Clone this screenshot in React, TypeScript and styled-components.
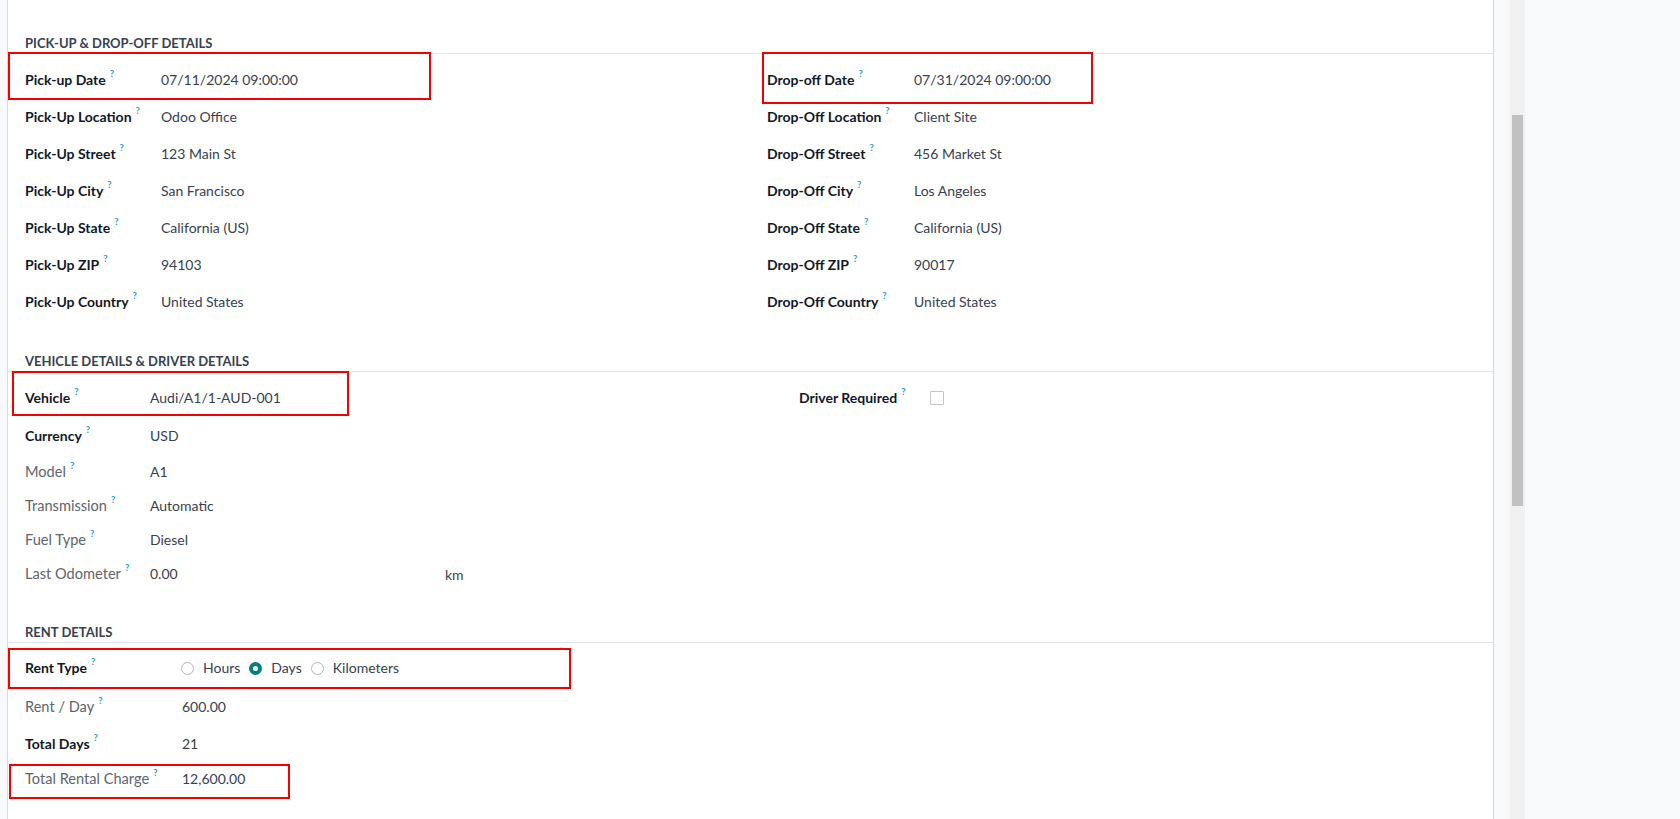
import React from 'react';
import styled, { createGlobalStyle } from 'styled-components';

const GlobalStyle = createGlobalStyle`
  html, body { margin: 0; padding: 0; }
  body {
    background: #f8f9fa;
    font-family: Lato, "Noto Sans", "Liberation Sans", sans-serif;
    -webkit-font-smoothing: antialiased;
  }
  * { box-sizing: border-box; }
`;

const Page = styled.div`
  display: flex;
  height: 819px;
  overflow: hidden;
  background: #f8f9fa;
  padding-left: 7px;
`;

const Sheet = styled.div`
  position: relative;
  flex: none;
  width: 1487px;
  background: #fff;
  border-left: 1px solid #d8dadd;
  border-right: 1px solid #d8dadd;
  padding-top: 33px;
`;

const ScrollTrack = styled.div`
  flex: none;
  width: 15px;
  margin-left: 16px;
  background: #f0f0f0;
  padding: 115px 2px 0;
`;

const ScrollThumb = styled.div`
  height: 391px;
  background: #c1c1c1;
`;

const Section = styled.section<{ $gap: number }>`
  margin-top: ${(p) => p.$gap}px;
`;

const SectionTitle = styled.h3`
  margin: 0;
  padding: 0 17px;
  height: 21px;
  line-height: 20px;
  font-size: 13px;
  font-weight: 700;
  color: #374151;
  text-transform: uppercase;
  border-bottom: 1px solid #e3e4e6;
`;

const Columns = styled.div`
  display: grid;
  grid-template-columns: 742px 1fr;
  padding: 7px 17px 0;
`;

const Group = styled.div<{ $indent?: number }>`
  display: flex;
  flex-direction: column;
  padding-left: ${(p) => p.$indent ?? 0}px;
`;

const Row = styled.div<{ $h: number; $label: number }>`
  display: grid;
  grid-template-columns: ${(p) => p.$label}px 1fr;
  align-items: center;
  height: ${(p) => p.$h}px;
`;

const Label = styled.span<{ $muted?: boolean }>`
  font-size: ${(p) => (p.$muted ? 14.6 : 14)}px;
  line-height: 20px;
  font-weight: ${(p) => (p.$muted ? 400 : 700)};
  color: ${(p) => (p.$muted ? '#60656d' : '#111827')};
  white-space: nowrap;
`;

const Help = styled.sup`
  font-size: 9.5px;
  font-weight: 700;
  color: #2a9bcc;
  margin-left: 4px;
  line-height: 0;
  position: relative;
  top: -2px;
`;

const Value = styled.span`
  font-size: 14px;
  line-height: 20px;
  color: #374151;
  white-space: nowrap;
`;

const UnitValue = styled.div`
  display: flex;
  align-items: center;
`;

const UnitField = styled.span`
  width: 295px;
  font-size: 14px;
  line-height: 20px;
  color: #374151;
`;

const Unit = styled.span`
  font-size: 14px;
  color: #374151;
`;

const RadioGroup = styled.div`
  display: flex;
  align-items: center;
  margin-left: -1px;
`;

const RadioOption = styled.label`
  display: flex;
  align-items: center;
  gap: 9px;
  margin-right: 9px;
  font-size: 14px;
  line-height: 20px;
  color: #374151;
`;

const RadioDot = styled.span<{ $on?: boolean }>`
  width: 13px;
  height: 13px;
  border-radius: 50%;
  background: #fff;
  border: ${(p) => (p.$on ? '4px solid #017e84' : '1px solid #b3b8be')};
`;

const Checkbox = styled.span`
  display: block;
  width: 14px;
  height: 14px;
  border: 1px solid #c4c6c9;
  border-radius: 1px;
  background: #fff;
`;

const Highlight = styled.div<{ $x: number; $y: number; $w: number; $h: number }>`
  position: absolute;
  left: ${(p) => p.$x}px;
  top: ${(p) => p.$y}px;
  width: ${(p) => p.$w}px;
  height: ${(p) => p.$h}px;
  border: 2px solid #f40000;
  pointer-events: none;
`;

type F = { label: string; value: string; h?: number; muted?: boolean };

const Field: React.FC<{ f: F; lw: number; children?: React.ReactNode }> = ({ f, lw, children }) => (
  <Row $h={f.h ?? 37} $label={lw}>
    <Label $muted={f.muted}>
      {f.label}
      <Help>?</Help>
    </Label>
    {children ?? <Value>{f.value}</Value>}
  </Row>
);

const pickup: F[] = [
  { label: 'Pick-up Date', value: '07/11/2024 09:00:00' },
  { label: 'Pick-Up Location', value: 'Odoo Office' },
  { label: 'Pick-Up Street', value: '123 Main St' },
  { label: 'Pick-Up City', value: 'San Francisco' },
  { label: 'Pick-Up State', value: 'California (US)' },
  { label: 'Pick-Up ZIP', value: '94103' },
  { label: 'Pick-Up Country', value: 'United States' },
];

const dropoff: F[] = [
  { label: 'Drop-off Date', value: '07/31/2024 09:00:00' },
  { label: 'Drop-Off Location', value: 'Client Site' },
  { label: 'Drop-Off Street', value: '456 Market St' },
  { label: 'Drop-Off City', value: 'Los Angeles' },
  { label: 'Drop-Off State', value: 'California (US)' },
  { label: 'Drop-Off ZIP', value: '90017' },
  { label: 'Drop-Off Country', value: 'United States' },
];

const vehicle: F[] = [
  { label: 'Vehicle', value: 'Audi/A1/1-AUD-001', h: 38 },
  { label: 'Currency', value: 'USD', h: 38 },
  { label: 'Model', value: 'A1', h: 34, muted: true },
  { label: 'Transmission', value: 'Automatic', h: 34, muted: true },
  { label: 'Fuel Type', value: 'Diesel', h: 34, muted: true },
];

const App: React.FC = () => (
  <>
    <GlobalStyle />
    <Page>
      <Sheet>
        <Section $gap={0}>
          <SectionTitle>Pick-up &amp; Drop-off Details</SectionTitle>
          <Columns>
            <Group>
              {pickup.map((f) => (
                <Field key={f.label} f={f} lw={136} />
              ))}
            </Group>
            <Group>
              {dropoff.map((f) => (
                <Field key={f.label} f={f} lw={147} />
              ))}
            </Group>
          </Columns>
        </Section>

        <Section $gap={31}>
          <SectionTitle>Vehicle Details &amp; Driver Details</SectionTitle>
          <Columns>
            <Group>
              {vehicle.map((f) => (
                <Field key={f.label} f={f} lw={125} />
              ))}
              <Field f={{ label: 'Last Odometer', value: '', h: 34, muted: true }} lw={125}>
                <UnitValue>
                  <UnitField>0.00</UnitField>
                  <Unit>km</Unit>
                </UnitValue>
              </Field>
            </Group>
            <Group $indent={32}>
              <Field f={{ label: 'Driver Required', value: '', h: 38 }} lw={131}>
                <Checkbox />
              </Field>
            </Group>
          </Columns>
        </Section>

        <Section $gap={31}>
          <SectionTitle>Rent Details</SectionTitle>
          <Columns>
            <Group>
              <Field f={{ label: 'Rent Type', value: '', h: 36 }} lw={157}>
                <RadioGroup>
                  <RadioOption>
                    <RadioDot />
                    Hours
                  </RadioOption>
                  <RadioOption>
                    <RadioDot $on />
                    Days
                  </RadioOption>
                  <RadioOption>
                    <RadioDot />
                    Kilometers
                  </RadioOption>
                </RadioGroup>
              </Field>
              <Field f={{ label: 'Rent / Day', value: '600.00', h: 42, muted: true }} lw={157} />
              <Field f={{ label: 'Total Days', value: '21', h: 32 }} lw={157} />
              <Field f={{ label: 'Total Rental Charge', value: '12,600.00', h: 38, muted: true }} lw={157} />
            </Group>
            <Group />
          </Columns>
        </Section>

        <Highlight $x={0} $y={52} $w={423} $h={48} />
        <Highlight $x={754} $y={52} $w={331} $h={52} />
        <Highlight $x={4} $y={371} $w={337} $h={45} />
        <Highlight $x={0} $y={648} $w={563} $h={41} />
        <Highlight $x={1} $y={764} $w={281} $h={35} />
      </Sheet>
      <ScrollTrack>
        <ScrollThumb />
      </ScrollTrack>
    </Page>
  </>
);

export default App;
